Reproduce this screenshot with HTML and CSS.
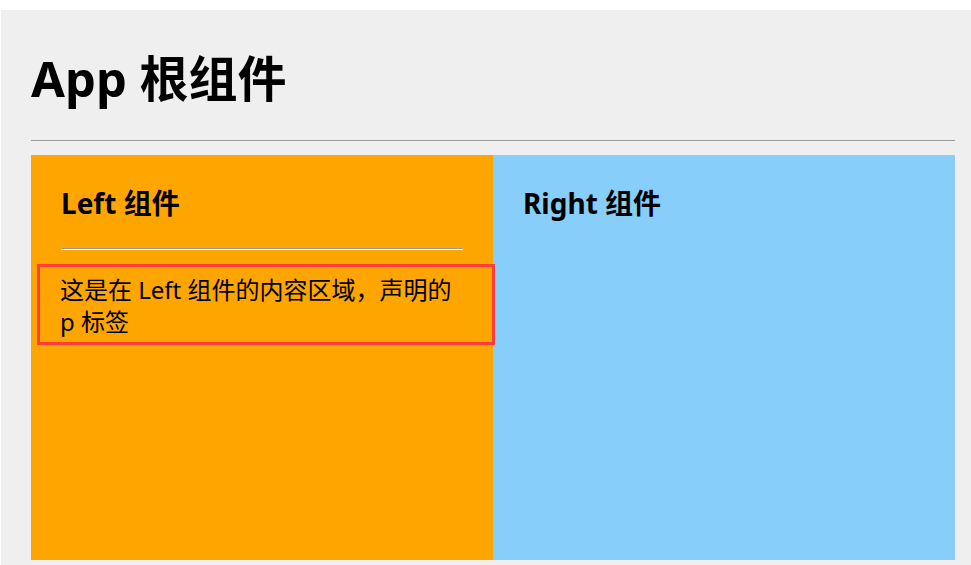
FILE: index.html
```html
<!DOCTYPE html>
<html lang="zh-CN">
<head>
<meta charset="utf-8">
<title>App 根组件</title>
<link rel="stylesheet" href="styles.css">
</head>
<body>
  <div class="app">
    <h1 class="app-title">App 根组件</h1>
    <hr class="app-rule">
    <div class="boxes">
      <div class="box box-left">
        <h3 class="box-title">Left 组件</h3>
        <hr class="box-rule">
        <p class="box-text">这是在 Left 组件的内容区域，声明的 p 标签</p>
      </div>
      <div class="box box-right">
        <h3 class="box-title">Right 组件</h3>
      </div>
    </div>
  </div>
</body>
</html>
```

FILE: styles.css
```css
html, body {
  margin: 0;
  padding: 0;
  background: #ffffff;
}

body {
  font-family: "Noto Sans", "Open Sans", "Noto Sans CJK SC", sans-serif;
  color: #000;
  overflow: hidden;
}

.app {
  margin: 10px 0 0 1px;
  padding: 36px 16px 20px 30px;
  background: #efefef;
}

.app-title {
  margin: 0 0 30px 0;
  font-size: 49px;
  line-height: 64px;
  font-weight: 700;
}

.app-rule {
  margin: 0 0 13px 0;
  border: none;
  border-top: 1px solid #9a9a9a;
  border-bottom: 1px solid #eeeeee;
  height: 0;
}

.boxes {
  display: flex;
}

.box {
  width: 462px;
  height: 405px;
  box-sizing: border-box;
  padding: 30px 30px 0 30px;
}

.box-left {
  background: #ffa500;
}

.box-right {
  background: #87cefa;
}

.box-title {
  margin: 0;
  font-size: 28px;
  line-height: 37px;
  font-weight: 700;
}

.box-rule {
  margin: 26px 0 14px 0;
  border: none;
  border-top: 1px solid #9a9a9a;
  border-bottom: 1px solid #ffffff;
  height: 0;
}

.box-text {
  position: relative;
  z-index: 1;
  margin: 0 -32px 0 -24px;
  padding: 7px 33px 4px 20px;
  border: 3px solid #ff3d3d;
  font-size: 24px;
  line-height: 32px;
}
```
